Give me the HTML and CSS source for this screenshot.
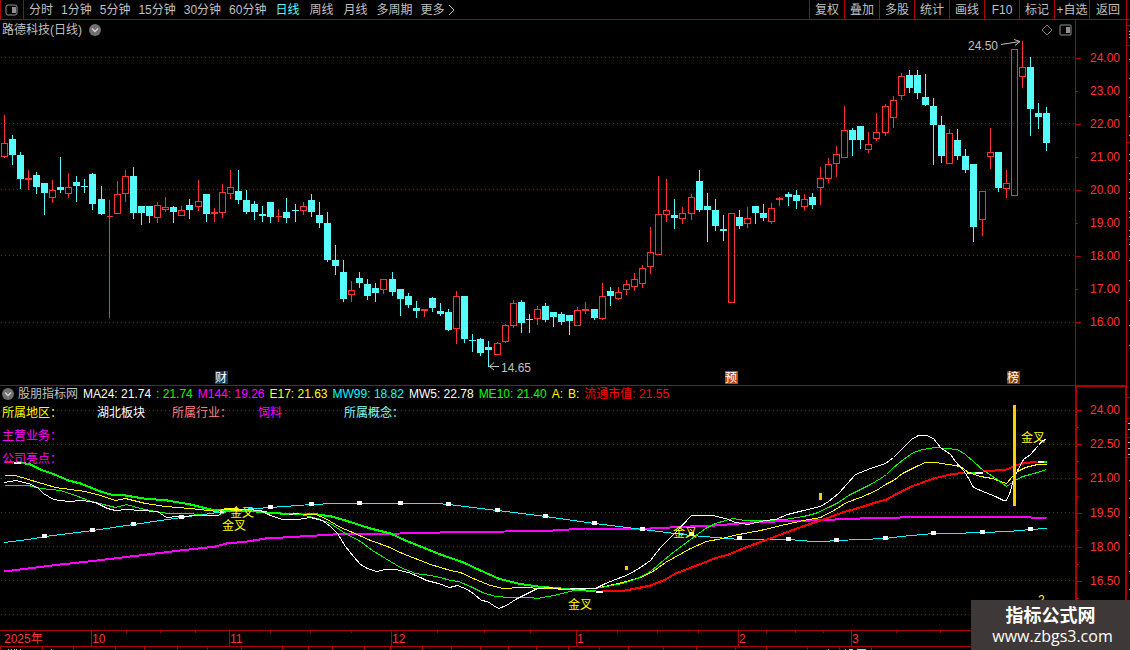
FILE: index.html
```html
<!DOCTYPE html>
<html lang="zh-CN">
<head>
<meta charset="utf-8">
<meta name="viewport" content="width=device-width, initial-scale=1">
<title>路德科技(日线)</title>
<link rel="stylesheet" href="styles.css">
</head>
<body>
<div class="app">
  <header class="toolbar">
    <button class="panel-toggle" type="button" aria-label="侧栏">
      <svg width="14" height="12" viewBox="0 0 14 12"><rect x="1" y="1" width="11" height="10" rx="2" fill="none" stroke="#909090"/><rect x="7" y="3" width="4" height="6" fill="#909090"/></svg>
    </button>
    <nav class="periods">
      <button type="button">分时</button>
      <button type="button">1分钟</button>
      <button type="button">5分钟</button>
      <button type="button">15分钟</button>
      <button type="button">30分钟</button>
      <button type="button">60分钟</button>
      <button type="button" class="wide active">日线</button>
      <button type="button" class="wide">周线</button>
      <button type="button" class="wide">月线</button>
      <button type="button">多周期</button>
      <button type="button" class="more">更多<svg width="7" height="10" viewBox="0 0 7 10"><path d="M1 0L6 5L1 10" fill="none" stroke="#c0c0c0"/></svg></button>
    </nav>
    <nav class="tools">
      <button type="button">复权</button>
      <button type="button">叠加</button>
      <button type="button">多股</button>
      <button type="button">统计</button>
      <button type="button">画线</button>
      <button type="button">F10</button>
      <button type="button">标记</button>
      <button type="button">+自选</button>
      <button type="button">返回</button>
    </nav>
  </header>

  <main class="board">
    <section class="chart price">
      <div class="title">
        <h1>路德科技(日线)</h1>
        <button type="button" class="chevron" aria-label="展开"><svg width="12" height="12" viewBox="0 0 12 12"><circle cx="6" cy="6" r="6" fill="#707070"/><path d="M3 4.500L6 7.500L9 4.500" fill="none" stroke="#d8d8d8" stroke-width="1.300"/></svg></button>
        <span class="view-tools">
          <svg width="12" height="12" viewBox="0 0 12 12"><path d="M6 1L11 6L6 11L1 6Z" fill="none" stroke="#808080"/></svg>
          <svg width="13" height="12" viewBox="0 0 13 12"><rect x="1" y="1" width="11" height="10" rx="1" fill="none" stroke="#909090"/><rect x="7" y="3" width="4" height="6" fill="#909090"/></svg>
        </span>
      </div>
      <svg class="plot" viewBox="0 40 1075 345">
        <path class="grid" d="M1 57.500H1075M1 123.500H1075M1 189.500H1075M1 255.500H1075M1 322.500H1075"/>
        <g id="candles"></g>
        <path class="arrow" d="M1001 44.500L1020 41.500M1014 39.500L1020 41.500L1015 45.500M489 366.500H499M494 362.500L489.500 366.500L494 370"/>
        <text class="note" x="968" y="50">24.50</text>
        <text class="note" x="501" y="372">14.65</text>
        <rect x="215" y="371" width="13" height="13" fill="#123a68"/><text class="badge" x="215" y="382">财</text>
        <rect x="725" y="371" width="13" height="13" fill="#c04808"/><text class="badge" x="725" y="382">预</text>
        <rect x="1007" y="371" width="13" height="13" fill="#804000"/><text class="badge" x="1007" y="382">榜</text>
      </svg>
    </section>
    <ol class="axis price-axis">
      <li>24.00</li><li>23.00</li><li>22.00</li><li>21.00</li><li>20.00</li><li>19.00</li><li>18.00</li><li>17.00</li><li>16.00</li>
    </ol>

    <section class="chart indicator">
      <div class="legend">
        <span class="name"><svg width="12" height="12" viewBox="0 0 12 12"><circle cx="6" cy="6" r="6" fill="#707070"/><path d="M3 4.500L6 7.500L9 4.500" fill="none" stroke="#d8d8d8" stroke-width="1.300"/></svg>股朋指标网</span>
        <span class="white">MA24: 21.74</span>
        <span class="green">: 21.74</span>
        <span class="magenta">M144: 19.26</span>
        <span class="yellow">E17: 21.63</span>
        <span class="cyan">MW99: 18.82</span>
        <span class="white">MW5: 22.78</span>
        <span class="green">ME10: 21.40</span>
        <span class="yellow">A:</span>
        <span class="yellow">B:</span>
        <span class="red">流通市值: 21.55</span>
      </div>
      <div class="plot-area">
        <svg class="plot" viewBox="0 402 1075 228">
          <path class="grid" d="M1 410.500H1075M1 444.500H1075M1 478.500H1075M1 512.500H1075M1 546.500H1075M1 580.500H1075M1 614.500H1075"/>
          <g class="curves" transform="translate(.5 .5)">
            <polyline class="thick" stroke="#f0f" points="4,571 20,569 60,564 88,561 130,556 180,550 215,546 226,543 247,541 265,538 300,536 333,534 400,533 440,532 505,531 553,530 585,528 650,528 690,526 715,525 750,522 775,521 810,520 860,518 900,517 910,516 990,516 1030,517 1046,518"/>
            <polyline stroke="#0ff" points="4,542 28,539 45,536 92,530 133,524 167,519 181,517 210,513 240,509 270,507 311,504 335,503 436,503 448,504 497,510 545,516 594,523 642,529 691,535 715,537 739,539 788,539 812,541 823,541 836,540 885,538 900,536 933,533 950,533 982,532 1008,531 1030,529 1046,528"/>
            <g id="markers"></g>
            <polyline class="thick" stroke="#0f0" points="20,462 30,464 40,469 54,474 68,480 80,483 90,487 100,491 110,494 125,495 143,498 167,500 190,504 210,509 245,510 265,512 280,513 310,513 331,516 345,520 370,528 390,533 405,540 425,548 440,554 463,562 480,570 498,578 517,583 537,586 560,588 575,589 595,591"/>
            <polyline class="thick" stroke="#f00" points="602,591 625,590 650,585 665,579 675,573 691,567 714,558 728,554 745,547 775,536 802,526 823,519 842,512 863,506 875,502 886,499 895,494 911,486 933,478 950,474 965,472"/>
            <polyline class="thick" stroke="#f00" points="983,471 1006,469 1015,465 1022,463 1037,461"/>
            <path class="thick" stroke="#f00" d="M4 461H13M300 513H306"/>
            <path class="thick" stroke="#fff" d="M13 462H20M288 513H298M595 591H602M966 472H982M1037 461H1043"/>
            <path class="thick" stroke="#0f0" d="M970 472H974M1043 461H1046"/>
            <polyline stroke="#ff0" points="4,475 15,475 28,479 55,487 85,491 100,495 115,500 125,498 145,503 165,506 190,508 217,511 225,508 250,509 270,512 300,514 315,514 325,518 340,527 350,531 370,540 387,546 402,553 430,564 450,570 460,572 475,579 490,585 503,588 520,587 545,588 575,589 595,588 622,582 640,577 651,572 665,562 690,548 706,541 722,538 733,535 760,530 785,524 803,520 820,517 835,509 846,502 860,497 876,490 885,484 893,480 902,473 918,465 925,462 935,462 948,464 960,466 968,472 980,476 992,478 1000,481 1006,483 1012,476 1017,471 1025,467 1037,464 1046,464"/>
            <polyline stroke="#0f0" points="4,485 28,485 40,488 60,490 75,495 88,500 103,504 115,507 126,504 140,508 155,511 168,513 190,513 205,515 217,515 227,511 240,511 270,512 300,514 317,518 330,523 345,533 360,541 372,550 385,558 400,567 415,573 430,575 440,577 450,580 458,581 470,586 482,592 495,596 510,597 530,597 537,598 553,595 570,591 580,588 595,588 622,583 637,578 650,571 670,554 690,539 705,528 715,523 732,518 745,520 765,520 785,519 803,516 815,513 828,507 838,502 848,495 860,489 870,484 880,478 886,474 893,467 903,459 913,452 922,449 935,447 957,449 965,454 974,462 983,470 997,479 1002,483 1006,486 1015,480 1022,476 1030,474 1040,471 1046,469"/>
            <polyline stroke="#fff" points="4,482 15,480 28,483 37,487 43,493 53,499 68,501 82,500 95,502 107,508 115,510 127,509 140,510 157,511 166,517 178,516 200,515 218,515 224,509 245,509 260,510 270,515 282,519 297,519 310,517 322,520 330,526 337,533 345,546 353,556 360,564 367,568 376,571 385,569 395,569 408,572 420,577 426,580 438,583 449,587 457,585 467,589 474,594 481,600 487,601 493,605 498,608 506,605 515,599 525,594 537,588 550,587 560,589 580,588 595,588 605,583 628,574 640,567 650,560 660,547 675,532 691,515 712,515 725,518 735,522 747,524 765,520 775,519 787,514 803,510 820,506 828,501 838,493 847,483 855,474 870,468 885,463 893,457 903,447 911,439 918,435 926,435 933,438 940,447 950,454 955,461 963,470 967,476 973,487 985,492 995,496 1003,500 1006,500 1010,491 1012,482 1017,470 1023,459 1030,454 1038,445 1042,440 1046,439"/>
          </g>
          <path fill="#fc0" d="M1013 405h3v101h-3zM819 493h3v7h-3zM625 566h3v4h-3z"/>
          <g class="cross">
            <text x="230" y="517">金叉</text>
            <text x="222" y="530">金叉</text>
            <text x="568" y="609">金叉</text>
            <text x="673" y="537">金叉</text>
            <text x="1021" y="442">金叉</text>
            <text x="1038" y="604">2</text>
          </g>
        </svg>
        <div class="facts">
          <span class="yellow">所属地区：</span><span class="white">湖北板块</span><span class="pink">所属行业：</span><span class="magenta">饲料</span><span class="aqua">所属概念：</span>
          <span class="magenta line">主营业务：</span>
          <span class="magenta line">公司亮点：</span>
        </div>
      </div>
    </section>
    <ol class="axis indicator-axis">
      <li>24.00</li><li>22.50</li><li>21.00</li><li>19.50</li><li>18.00</li><li>16.50</li>
    </ol>

    <svg class="edge" viewBox="0 20 3 610" preserveAspectRatio="none">
      <path stroke="#b00000" d="M0 25.500h3M0 45.500h3M0 142.500h3M0 239.500h3M0 397.500h3M0 418.500h3M0 437.500h3M0 457.500h3"/>
      <path stroke="#c0c0c0" d="M2 31.500h1M2 34.500h1M2 37.500h1M2 59.500h1M2 78.500h1M2 97.500h1M2 116.500h1M2 135.500h1M2 154.500h1M2 160.500h1M2 173.500h1M2 179.500h1M2 192.500h1M2 198.500h1M2 211.500h1M2 217.500h1M2 230.500h1M2 236.500h1M2 244.500h1M2 260.500h1M2 280.500h1M2 300.500h1M2 325.500h1M2 345.500h1M1 423.500h2M1 429.500h2M1 442.500h2M1 448.500h2M1 454.500h2M2 480.500h1M2 498.500h1M2 517.500h1M2 535.500h1M2 553.500h1M2 571.500h1M2 589.500h1"/>
    </svg>
  </main>

  <footer class="timeline">
    <svg class="plot" viewBox="0 630 1130 20">
      <path class="rule" d="M0 630.500H1130M0 646.500H1130M91.500 630V646M229.500 630V646M391.500 630V646M576.500 630V646M738.500 630V646M851.500 630V646"/>
      <g id="ticks"></g>
      <path stroke="#c0c0c0" d="M8 649.500h1M11 649.500h1M14 649.500h1M16 649.500h1M20 649.500h1M51 649.500h1M828 649.500h1M845 649.500h1"/>
      <path stroke="#54fcfc" d="M849 649.500h4M857 649.500h9"/>
      <g class="dates">
        <text x="4" y="643">2025年</text>
        <text x="92" y="643">10</text>
        <text x="230" y="643">11</text>
        <text x="392" y="643">12</text>
        <text x="577" y="643">1</text>
        <text x="739" y="643">2</text>
        <text x="852" y="643">3</text>
      </g>
    </svg>
  </footer>

  <aside class="watermark">
    <strong>指标公式网</strong>
    <span>www.zbgs3.com</span>
  </aside>
</div>
<script src="chart.js"></script>
</body>
</html>
```
FILE: styles.css
```css
* {
  box-sizing: border-box;
}

body {
  margin: 0;
  background: #000;
  color: #c0c0c0;
  font-family: "Liberation Sans", "Noto Sans CJK SC", sans-serif;
  font-size: 12px;
  line-height: 16px;
}

button {
  margin: 0;
  padding: 0;
  border: 0;
  background: none;
  color: inherit;
  font: inherit;
  white-space: nowrap;
}

svg {
  display: block;
  flex: none;
}

.app {
  position: relative;
  overflow: hidden;
}

.toolbar {
  display: flex;
  height: 20px;
  padding-right: 3px;
  border-bottom: 1px solid #b00000;
}

.panel-toggle {
  display: flex;
  align-items: center;
  justify-content: center;
  width: 24px;
  border: solid #b00000;
  border-width: 0 1px;
}

.periods {
  display: flex;
  gap: 8px;
  padding-left: 5px;
}

.periods .wide {
  padding: 0 1px;
}

.periods .active {
  color: #54fcfc;
}

.periods .more {
  display: flex;
  align-items: center;
  gap: 3px;
}

.tools {
  display: flex;
  margin-left: auto;
  border-right: 1px solid #b00000;
}

.tools button {
  width: 35px;
  border-left: 1px solid #b00000;
}

.tools button:last-child {
  width: 37px;
}

.board {
  display: grid;
  grid-template-columns: minmax(0, 1fr) 52px 3px;
}

.chart {
  grid-column: 1;
}

.title {
  display: flex;
  align-items: center;
  gap: 7px;
  height: 20px;
  padding: 0 3px 0 2px;
}

.title h1 {
  margin: 0;
  font-size: 12px;
  font-weight: normal;
}

.view-tools {
  display: flex;
  gap: 6px;
  margin-left: auto;
}

.plot {
  width: 100%;
  height: auto;
  overflow: visible;
}

.grid {
  fill: none;
  stroke: #a00c0c;
  stroke-dasharray: 1 3;
  shape-rendering: crispEdges;
}

.up {
  fill: none;
  stroke: #ff3232;
  shape-rendering: crispEdges;
}

.down {
  fill: #54fcfc;
  shape-rendering: crispEdges;
}

.arrow {
  fill: none;
  stroke: #c0c0c0;
}

.note {
  fill: #c0c0c0;
}

.badge {
  fill: #fff;
}

.curves {
  fill: none;
  shape-rendering: crispEdges;
}

.curves .thick {
  stroke-width: 2;
}

.cross {
  fill: #ff0;
}

.axis {
  display: flex;
  flex-direction: column;
  margin: 0;
  list-style: none;
  color: #ff3232;
  border: solid #b00000;
}

.axis li {
  position: relative;
  display: flex;
  flex: 1;
  align-items: center;
  padding-left: 14px;
}

.axis li::before,
.indicator-axis li::after {
  position: absolute;
  left: 0;
  top: 50%;
  width: 5px;
  height: 1px;
  background: #b00000;
  content: "";
}

.price-axis {
  grid-column: 2;
  padding: 21px 0 47px;
  border-width: 0 1px;
}

.price-axis li:nth-child(even)::before {
  width: 2px;
}

.indicator {
  border-top: 1px solid #b00000;
}

.indicator-axis {
  grid-column: 2;
  padding: 6px 0 32px;
  border-width: 2px 2px 0;
}

.indicator-axis li {
  padding-left: 13px;
}

.indicator-axis li::after {
  top: 100%;
  width: 2px;
}

.legend {
  display: flex;
  gap: 5px;
  height: 16px;
  padding-left: 2px;
  white-space: nowrap;
}

.name {
  display: flex;
  align-items: center;
  gap: 4px;
}

.plot-area {
  position: relative;
}

.facts {
  position: absolute;
  left: 2px;
  top: 0;
  display: grid;
  grid-template-columns: 95px 75px 86px 86px auto;
  line-height: 23px;
}

.line {
  grid-column: 1 / -1;
}

.edge {
  grid-column: 3;
  grid-row: 1 / span 2;
  width: 3px;
  height: 100%;
  shape-rendering: crispEdges;
}

.timeline .plot {
  shape-rendering: crispEdges;
}

.rule,
.tick {
  fill: none;
  stroke: #b00000;
}

.dates {
  fill: #ff3232;
}

.white { color: #fff; }
.green { color: #0f0; }
.magenta { color: #f0f; }
.yellow { color: #ff0; }
.cyan { color: #0ff; }
.red { color: #f00; }
.pink { color: #ff8080; }
.aqua { color: #80ffff; }

.watermark {
  position: absolute;
  right: 0;
  bottom: 0;
  display: flex;
  flex-direction: column;
  align-items: center;
  width: 159px;
  height: 50px;
  padding-top: 6px;
  background: #3e3838;
  color: #fff;
}

.watermark strong {
  font-size: 18px;
  line-height: 20px;
}

.watermark span {
  font-family: "Open Sans", sans-serif;
  font-size: 16px;
  line-height: 20px;
  padding-left: 4px;
}
```
FILE: chart.js
```js
const NS = "http://www.w3.org/2000/svg";

// Each row: direction, high, body top, body bottom, low.
const candles = `
u115,143,157,158 d135,139,155,165 d152,155,179,189 u170,178,180,190 d172,175,187,194 d183,183,193,215
u180,190,198,203 d157,187,190,193 u173,187,194,198 d176,182,186,202 d179,186,187,193 d173,174,204,210
d186,199,214,215 u200,216,217,318 u181,194,214,214 u170,176,194,202 d167,176,213,219 d206,206,213,225
d206,206,216,223 u202,205,218,223 u197,207,210,212 d206,207,212,223 u206,210,216,216 d199,205,210,219
u180,201,207,211 d194,194,214,222 u208,212,214,222 u184,192,213,218 u170,187,194,199 d170,191,200,204
d190,200,212,214 d201,204,212,220 d206,214,216,222 d202,202,217,223 u209,216,217,222 d198,212,218,223
d204,210,211,222 u202,206,211,215 d194,200,212,217 d202,215,223,228 d212,223,260,262 d245,260,266,275
d260,272,299,302 u281,290,295,302 d272,278,283,288 d279,284,296,300 d283,288,293,302 u279,279,290,294
d272,279,292,296 d289,289,299,316 d293,296,305,308 d301,308,311,318 u309,309,311,317 d297,298,308,312
d303,311,314,316 d309,312,330,331 u291,296,329,344 d296,296,339,343 d334,340,341,352 d338,339,353,356
d341,347,350,367 u342,343,355,355 u324,325,342,343 u300,303,326,328 d300,302,323,333 d314,319,320,333
u306,309,319,325 d303,306,320,322 d312,312,317,327 d312,314,322,325 d315,315,321,335 u307,310,326,326
u302,309,311,314 d309,309,318,320 u283,296,319,320 d287,291,296,306 u287,292,299,300 u280,284,290,295
u273,279,287,291 u265,268,284,288 u227,252,267,274 u176,214,255,255 u179,210,215,222 d199,215,218,229
u207,213,219,224 u194,197,214,220 d170,181,210,212 d193,206,210,242 d199,210,226,231 d215,229,231,241
u213,213,303,303 d210,217,226,229 u207,218,224,228 d206,206,213,224 d204,213,218,221 u203,208,222,224
u197,198,200,206 d192,194,197,206 d190,195,201,209 u194,199,207,211 d193,197,205,209 u167,178,188,205
u158,164,179,183 u146,154,164,177 u106,130,158,158 d128,130,140,156 d126,126,140,149 u132,144,150,153
u113,132,139,141 u104,106,133,136 u96,100,118,128 u73,76,96,100 d70,75,88,93 d70,75,93,99
d74,97,105,106 d98,106,125,165 d116,125,156,163 u129,133,164,164 d129,140,156,160 d149,156,170,173
d164,164,227,242 u191,191,220,236 u128,152,157,169 d152,152,188,192 u170,183,189,198 u49,49,196,196
u41,67,77,88 d57,67,109,136 d103,113,117,129 d107,113,143,151`.trim().split(/\s+/);

function addPath(parent, className, d) {
  const path = document.createElementNS(NS, "path");
  path.setAttribute("class", className);
  path.setAttribute("d", d);
  document.getElementById(parent).append(path);
}

candles.forEach((row, i) => {
  const [high, top, bottom, low] = row.slice(1).split(",").map(Number);
  const x = 4 + 8 * i + Math.floor(i * 0.083 + 0.018);
  if (row[0] === "u") {
    addPath("candles", "up",
      `M${x + 0.5} ${high}V${top}M${x + 0.5} ${bottom}V${low}M${x - 2.5} ${top + 0.5}h6V${bottom - 0.5}h-6Z`);
  } else {
    addPath("candles", "down",
      `M${x} ${high}h1V${low}h-1ZM${x - 3} ${top}h7V${bottom}h-7Z`);
  }
});

const markers = [[44, 536], [92, 530], [133, 524], [181, 517], [222, 511], [270, 507], [311, 504], [359, 503],
  [400, 503], [448, 504], [497, 510], [545, 516], [594, 523], [642, 529], [691, 534], [739, 538], [788, 539],
  [836, 540], [885, 538], [933, 533], [982, 532], [1030, 529]];
for (const [x, y] of markers) {
  addPath("markers", "marker", `M${x - 2.5} ${y - 2.5}h5v4h-5z`);
}
document.getElementById("markers").setAttribute("fill", "#fff");

const minor = [126, 160, 195, 270, 310, 351, 437, 484, 530, 617, 657, 698, 766, 795, 823, 896, 940];
const lower = [0, 42, 73, 115, 144, 177, 207, 241, 282, 308, 332, 364, 390, 422, 451, 480, 508, 536, 568, 599,
  628, 663, 696, 735, 766, 807, 839, 871];
addPath("ticks", "tick", minor.map(x => `M${x + 0.5} 630v3`).join("") + lower.map(x => `M${x + 0.5} 647v3`).join(""));
```
